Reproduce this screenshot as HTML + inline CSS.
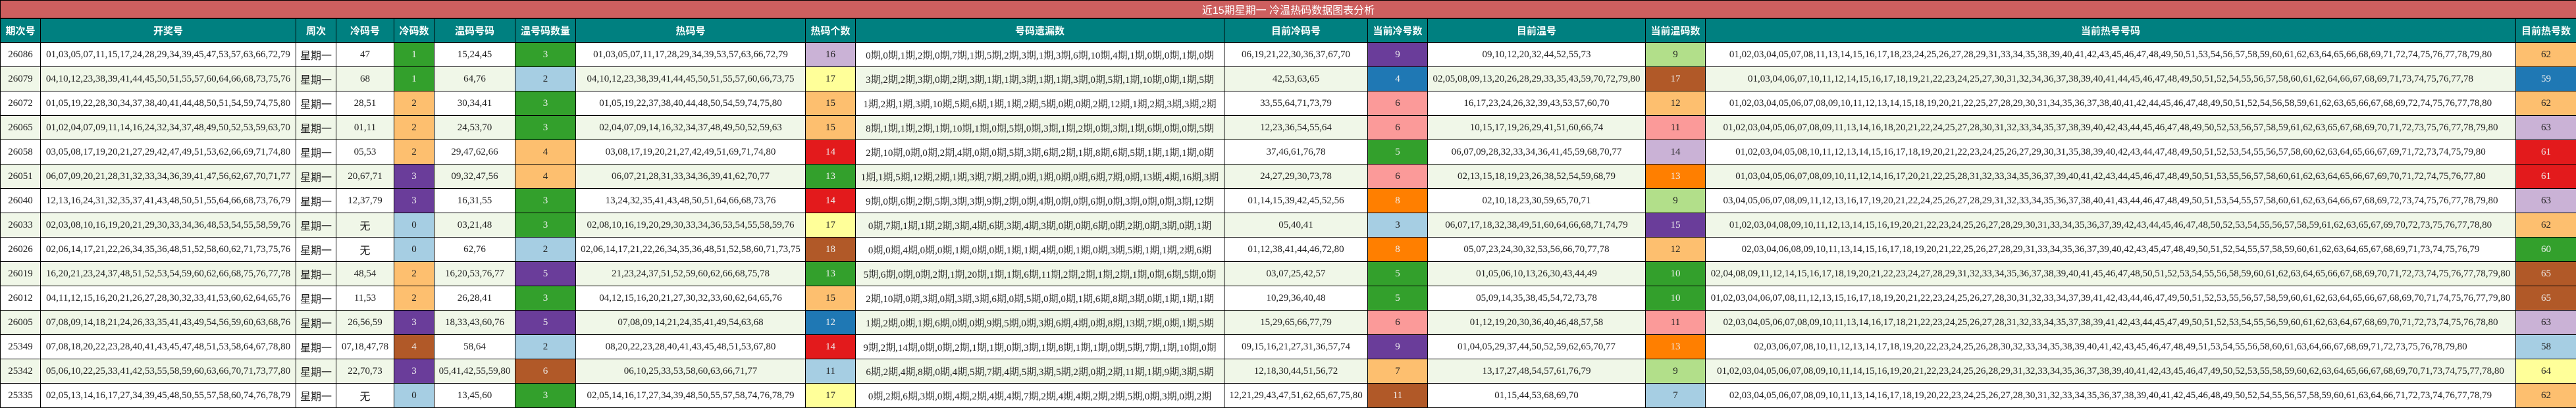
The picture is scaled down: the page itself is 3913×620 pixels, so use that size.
<!DOCTYPE html>
<html><head><meta charset="utf-8">
<style>
html,body{margin:0;padding:0;background:#fff;}
body{width:3913px;height:620px;overflow:hidden;}
table{border-collapse:collapse;table-layout:fixed;width:3913px;font-family:"Liberation Serif","Noto Serif CJK SC",serif;font-size:15px;color:#222;}
td,th{border:1px solid #000;padding:0;text-align:center;white-space:nowrap;overflow:hidden;}
.t td{height:26px;background:#cd5f5f;color:#fff;font-family:"Liberation Sans","Noto Sans CJK SC",sans-serif;font-size:16px;border-bottom:2px solid #000;}
.h th{height:35px;background:#008080;color:#fff;font-family:"Liberation Sans","Noto Sans CJK SC",sans-serif;font-size:15px;font-weight:bold;}
tr.d td{height:36px;}
tr.a td{background:#f0f7e8;}
td.wk{font-family:"Liberation Sans","Noto Sans CJK SC",sans-serif;font-size:16px;}
tr.d td.g{background:#33a02c;color:#eee}
tr.d td.lb{background:#a6cee3}
tr.d td.lo{background:#fdbf6f}
tr.d td.p{background:#6a3d9a;color:#eee}
tr.d td.br{background:#b15928;color:#eee}
tr.d td.r{background:#e31a1c;color:#eee}
tr.d td.db{background:#1f78b4;color:#eee}
tr.d td.pk{background:#fb9a99}
tr.d td.o{background:#ff7f00;color:#eee}
tr.d td.lp{background:#cab2d6}
tr.d td.y{background:#ffff99}
tr.d td.lg{background:#b2df8a}
</style></head><body>
<table>
<colgroup>
<col style="width:61px"><col style="width:388px"><col style="width:61px"><col style="width:88px"><col style="width:61px"><col style="width:123px"><col style="width:92px"><col style="width:349px"><col style="width:76px"><col style="width:560px"><col style="width:218px"><col style="width:91px"><col style="width:331px"><col style="width:91px"><col style="width:1231px"><col style="width:92px">
</colgroup>
<tr class="t"><td colspan="16">近15期星期一 冷温热码数据图表分析</td></tr>
<tr class="h"><th>期次号</th><th>开奖号</th><th>周次</th><th>冷码号</th><th>冷码数</th><th>温码号码</th><th>温号码数量</th><th>热码号</th><th>热码个数</th><th>号码遗漏数</th><th>目前冷码号</th><th>当前冷号数</th><th>目前温号</th><th>当前温码数</th><th>当前热号号码</th><th>目前热号数</th></tr>

<tr class="d"><td>26086</td><td>01,03,05,07,11,15,17,24,28,29,34,39,45,47,53,57,63,66,72,79</td><td class="wk">星期一</td><td>47</td><td class="g">1</td><td>15,24,45</td><td class="g">3</td><td>01,03,05,07,11,17,28,29,34,39,53,57,63,66,72,79</td><td class="lp">16</td><td>0期,0期,1期,2期,0期,7期,1期,5期,2期,3期,1期,3期,6期,10期,4期,1期,0期,0期,1期,0期</td><td>06,19,21,22,30,36,37,67,70</td><td class="p">9</td><td>09,10,12,20,32,44,52,55,73</td><td class="lg">9</td><td>01,02,03,04,05,07,08,11,13,14,15,16,17,18,23,24,25,26,27,28,29,31,33,34,35,38,39,40,41,42,43,45,46,47,48,49,50,51,53,54,56,57,58,59,60,61,62,63,64,65,66,68,69,71,72,74,75,76,77,78,79,80</td><td class="lo">62</td></tr>

<tr class="d a"><td>26079</td><td>04,10,12,23,38,39,41,44,45,50,51,55,57,60,64,66,68,73,75,76</td><td class="wk">星期一</td><td>68</td><td class="g">1</td><td>64,76</td><td class="lb">2</td><td>04,10,12,23,38,39,41,44,45,50,51,55,57,60,66,73,75</td><td class="y">17</td><td>3期,2期,2期,3期,0期,2期,3期,1期,1期,3期,1期,1期,3期,0期,5期,1期,10期,0期,1期,5期</td><td>42,53,63,65</td><td class="db">4</td><td>02,05,08,09,13,20,26,28,29,33,35,43,59,70,72,79,80</td><td class="br">17</td><td>01,03,04,06,07,10,11,12,14,15,16,17,18,19,21,22,23,24,25,27,30,31,32,34,36,37,38,39,40,41,44,45,46,47,48,49,50,51,52,54,55,56,57,58,60,61,62,64,66,67,68,69,71,73,74,75,76,77,78</td><td class="db">59</td></tr>

<tr class="d"><td>26072</td><td>01,05,19,22,28,30,34,37,38,40,41,44,48,50,51,54,59,74,75,80</td><td class="wk">星期一</td><td>28,51</td><td class="lo">2</td><td>30,34,41</td><td class="g">3</td><td>01,05,19,22,37,38,40,44,48,50,54,59,74,75,80</td><td class="lo">15</td><td>1期,2期,1期,3期,10期,5期,6期,1期,1期,2期,5期,0期,0期,2期,12期,1期,2期,3期,3期,2期</td><td>33,55,64,71,73,79</td><td class="pk">6</td><td>16,17,23,24,26,32,39,43,53,57,60,70</td><td class="lo">12</td><td>01,02,03,04,05,06,07,08,09,10,11,12,13,14,15,18,19,20,21,22,25,27,28,29,30,31,34,35,36,37,38,40,41,42,44,45,46,47,48,49,50,51,52,54,56,58,59,61,62,63,65,66,67,68,69,72,74,75,76,77,78,80</td><td class="lo">62</td></tr>

<tr class="d a"><td>26065</td><td>01,02,04,07,09,11,14,16,24,32,34,37,48,49,50,52,53,59,63,70</td><td class="wk">星期一</td><td>01,11</td><td class="lo">2</td><td>24,53,70</td><td class="g">3</td><td>02,04,07,09,14,16,32,34,37,48,49,50,52,59,63</td><td class="lo">15</td><td>8期,1期,1期,2期,1期,10期,1期,0期,5期,0期,3期,1期,2期,0期,3期,1期,6期,0期,0期,5期</td><td>12,23,36,54,55,64</td><td class="pk">6</td><td>10,15,17,19,26,29,41,51,60,66,74</td><td class="pk">11</td><td>01,02,03,04,05,06,07,08,09,11,13,14,16,18,20,21,22,24,25,27,28,30,31,32,33,34,35,37,38,39,40,42,43,44,45,46,47,48,49,50,52,53,56,57,58,59,61,62,63,65,67,68,69,70,71,72,73,75,76,77,78,79,80</td><td class="lp">63</td></tr>

<tr class="d"><td>26058</td><td>03,05,08,17,19,20,21,27,29,42,47,49,51,53,62,66,69,71,74,80</td><td class="wk">星期一</td><td>05,53</td><td class="lo">2</td><td>29,47,62,66</td><td class="lo">4</td><td>03,08,17,19,20,21,27,42,49,51,69,71,74,80</td><td class="r">14</td><td>2期,10期,0期,0期,2期,4期,0期,0期,5期,3期,6期,2期,1期,8期,6期,5期,1期,1期,1期,0期</td><td>37,46,61,76,78</td><td class="g">5</td><td>06,07,09,28,32,33,34,36,41,45,59,68,70,77</td><td class="lp">14</td><td>01,02,03,04,05,08,10,11,12,13,14,15,16,17,18,19,20,21,22,23,24,25,26,27,29,30,31,35,38,39,40,42,43,44,47,48,49,50,51,52,53,54,55,56,57,58,60,62,63,64,65,66,67,69,71,72,73,74,75,79,80</td><td class="r">61</td></tr>

<tr class="d a"><td>26051</td><td>06,07,09,20,21,28,31,32,33,34,36,39,41,47,56,62,67,70,71,77</td><td class="wk">星期一</td><td>20,67,71</td><td class="p">3</td><td>09,32,47,56</td><td class="lo">4</td><td>06,07,21,28,31,33,34,36,39,41,62,70,77</td><td class="g">13</td><td>1期,1期,5期,12期,2期,1期,3期,7期,2期,0期,1期,0期,0期,6期,7期,0期,13期,4期,16期,3期</td><td>24,27,29,30,73,78</td><td class="pk">6</td><td>02,13,15,18,19,23,26,38,52,54,59,68,79</td><td class="o">13</td><td>01,03,04,05,06,07,08,09,10,11,12,14,16,17,20,21,22,25,28,31,32,33,34,35,36,37,39,40,41,42,43,44,45,46,47,48,49,50,51,53,55,56,57,58,60,61,62,63,64,65,66,67,69,70,71,72,74,75,76,77,80</td><td class="r">61</td></tr>

<tr class="d"><td>26040</td><td>12,13,16,24,31,32,35,37,41,43,48,50,51,55,64,66,68,73,76,79</td><td class="wk">星期一</td><td>12,37,79</td><td class="p">3</td><td>16,31,55</td><td class="g">3</td><td>13,24,32,35,41,43,48,50,51,64,66,68,73,76</td><td class="r">14</td><td>9期,0期,6期,2期,5期,3期,3期,9期,2期,0期,4期,0期,0期,6期,0期,3期,0期,0期,3期,12期</td><td>01,14,15,39,42,45,52,56</td><td class="o">8</td><td>02,10,18,23,30,59,65,70,71</td><td class="lg">9</td><td>03,04,05,06,07,08,09,11,12,13,16,17,19,20,21,22,24,25,26,27,28,29,31,32,33,34,35,36,37,38,40,41,43,44,46,47,48,49,50,51,53,54,55,57,58,60,61,62,63,64,66,67,68,69,72,73,74,75,76,77,78,79,80</td><td class="lp">63</td></tr>

<tr class="d a"><td>26033</td><td>02,03,08,10,16,19,20,21,29,30,33,34,36,48,53,54,55,58,59,76</td><td class="wk">星期一</td><td class="wk">无</td><td class="lb">0</td><td>03,21,48</td><td class="g">3</td><td>02,08,10,16,19,20,29,30,33,34,36,53,54,55,58,59,76</td><td class="y">17</td><td>0期,7期,1期,1期,2期,3期,4期,6期,3期,4期,3期,0期,0期,6期,0期,2期,0期,3期,0期,1期</td><td>05,40,41</td><td class="lb">3</td><td>06,07,17,18,32,38,49,51,60,64,66,68,71,74,79</td><td class="p">15</td><td>01,02,03,04,08,09,10,11,12,13,14,15,16,19,20,21,22,23,24,25,26,27,28,29,30,31,33,34,35,36,37,39,42,43,44,45,46,47,48,50,52,53,54,55,56,57,58,59,61,62,63,65,67,69,70,72,73,75,76,77,78,80</td><td class="lo">62</td></tr>

<tr class="d"><td>26026</td><td>02,06,14,17,21,22,26,34,35,36,48,51,52,58,60,62,71,73,75,76</td><td class="wk">星期一</td><td class="wk">无</td><td class="lb">0</td><td>62,76</td><td class="lb">2</td><td>02,06,14,17,21,22,26,34,35,36,48,51,52,58,60,71,73,75</td><td class="br">18</td><td>0期,0期,4期,0期,0期,1期,0期,0期,1期,1期,4期,0期,1期,0期,3期,5期,1期,1期,2期,6期</td><td>01,12,38,41,44,46,72,80</td><td class="o">8</td><td>05,07,23,24,30,32,53,56,66,70,77,78</td><td class="lo">12</td><td>02,03,04,06,08,09,10,11,13,14,15,16,17,18,19,20,21,22,25,26,27,28,29,31,33,34,35,36,37,39,40,42,43,45,47,48,49,50,51,52,54,55,57,58,59,60,61,62,63,64,65,67,68,69,71,73,74,75,76,79</td><td class="g">60</td></tr>

<tr class="d a"><td>26019</td><td>16,20,21,23,24,37,48,51,52,53,54,59,60,62,66,68,75,76,77,78</td><td class="wk">星期一</td><td>48,54</td><td class="lo">2</td><td>16,20,53,76,77</td><td class="p">5</td><td>21,23,24,37,51,52,59,60,62,66,68,75,78</td><td class="g">13</td><td>5期,6期,0期,0期,2期,1期,20期,1期,1期,6期,11期,2期,2期,1期,2期,1期,0期,6期,5期,0期</td><td>03,07,25,42,57</td><td class="g">5</td><td>01,05,06,10,13,26,30,43,44,49</td><td class="g">10</td><td>02,04,08,09,11,12,14,15,16,17,18,19,20,21,22,23,24,27,28,29,31,32,33,34,35,36,37,38,39,40,41,45,46,47,48,50,51,52,53,54,55,56,58,59,60,61,62,63,64,65,66,67,68,69,70,71,72,73,74,75,76,77,78,79,80</td><td class="br">65</td></tr>

<tr class="d"><td>26012</td><td>04,11,12,15,16,20,21,26,27,28,30,32,33,41,53,60,62,64,65,76</td><td class="wk">星期一</td><td>11,53</td><td class="lo">2</td><td>26,28,41</td><td class="g">3</td><td>04,12,15,16,20,21,27,30,32,33,60,62,64,65,76</td><td class="lo">15</td><td>2期,10期,0期,3期,0期,3期,3期,6期,0期,5期,0期,0期,1期,6期,8期,3期,0期,1期,1期,1期</td><td>10,29,36,40,48</td><td class="g">5</td><td>05,09,14,35,38,45,54,72,73,78</td><td class="g">10</td><td>01,02,03,04,06,07,08,11,12,13,15,16,17,18,19,20,21,22,23,24,25,26,27,28,30,31,32,33,34,37,39,41,42,43,44,46,47,49,50,51,52,53,55,56,57,58,59,60,61,62,63,64,65,66,67,68,69,70,71,74,75,76,77,79,80</td><td class="br">65</td></tr>

<tr class="d a"><td>26005</td><td>07,08,09,14,18,21,24,26,33,35,41,43,49,54,56,59,60,63,68,76</td><td class="wk">星期一</td><td>26,56,59</td><td class="p">3</td><td>18,33,43,60,76</td><td class="p">5</td><td>07,08,09,14,21,24,35,41,49,54,63,68</td><td class="db">12</td><td>1期,2期,0期,1期,6期,0期,0期,9期,5期,0期,3期,6期,4期,0期,8期,13期,7期,0期,1期,5期</td><td>15,29,65,66,77,79</td><td class="pk">6</td><td>01,12,19,20,30,36,40,46,48,57,58</td><td class="pk">11</td><td>02,03,04,05,06,07,08,09,10,11,13,14,16,17,18,21,22,23,24,25,26,27,28,31,32,33,34,35,37,38,39,41,42,43,44,45,47,49,50,51,52,53,54,55,56,59,60,61,62,63,64,67,68,69,70,71,72,73,74,75,76,78,80</td><td class="lp">63</td></tr>

<tr class="d"><td>25349</td><td>07,08,18,20,22,23,28,40,41,43,45,47,48,51,53,58,64,67,78,80</td><td class="wk">星期一</td><td>07,18,47,78</td><td class="br">4</td><td>58,64</td><td class="lb">2</td><td>08,20,22,23,28,40,41,43,45,48,51,53,67,80</td><td class="r">14</td><td>9期,2期,14期,0期,0期,2期,1期,1期,0期,3期,1期,8期,1期,1期,0期,5期,7期,1期,10期,0期</td><td>09,15,16,21,27,31,36,57,74</td><td class="p">9</td><td>01,04,05,29,37,44,50,52,59,62,65,70,77</td><td class="o">13</td><td>02,03,06,07,08,10,11,12,13,14,17,18,19,20,22,23,24,25,26,28,30,32,33,34,35,38,39,40,41,42,43,45,46,47,48,49,51,53,54,55,56,58,60,61,63,64,66,67,68,69,71,72,73,75,76,78,79,80</td><td class="lb">58</td></tr>

<tr class="d a"><td>25342</td><td>05,06,10,22,25,33,41,42,53,55,58,59,60,63,66,70,71,73,77,80</td><td class="wk">星期一</td><td>22,70,73</td><td class="p">3</td><td>05,41,42,55,59,80</td><td class="br">6</td><td>06,10,25,33,53,58,60,63,66,71,77</td><td class="lb">11</td><td>6期,2期,4期,8期,0期,4期,5期,7期,4期,5期,3期,5期,2期,0期,2期,11期,1期,9期,3期,5期</td><td>12,18,30,44,51,56,72</td><td class="lo">7</td><td>13,17,27,48,54,57,61,76,79</td><td class="lg">9</td><td>01,02,03,04,05,06,07,08,09,10,11,14,15,16,19,20,21,22,23,24,25,26,28,29,31,32,33,34,35,36,37,38,39,40,41,42,43,45,46,47,49,50,52,53,55,58,59,60,62,63,64,65,66,67,68,69,70,71,73,74,75,77,78,80</td><td class="y">64</td></tr>

<tr class="d"><td>25335</td><td>02,05,13,14,16,17,27,34,39,45,48,50,55,57,58,60,74,76,78,79</td><td class="wk">星期一</td><td class="wk">无</td><td class="lb">0</td><td>13,45,60</td><td class="g">3</td><td>02,05,14,16,17,27,34,39,48,50,55,57,58,74,76,78,79</td><td class="y">17</td><td>0期,2期,6期,3期,0期,4期,2期,4期,4期,7期,2期,4期,4期,2期,2期,5期,0期,3期,0期,2期</td><td>12,21,29,43,47,51,62,65,67,75,80</td><td class="br">11</td><td>01,15,44,53,68,69,70</td><td class="lb">7</td><td>02,03,04,05,06,07,08,09,10,11,13,14,16,17,18,19,20,22,23,24,25,26,27,28,30,31,32,33,34,35,36,37,38,39,40,41,42,45,46,48,49,50,52,54,55,56,57,58,59,60,61,63,64,66,71,72,73,74,76,77,78,79</td><td class="lo">62</td></tr>
</table>
</body></html>
